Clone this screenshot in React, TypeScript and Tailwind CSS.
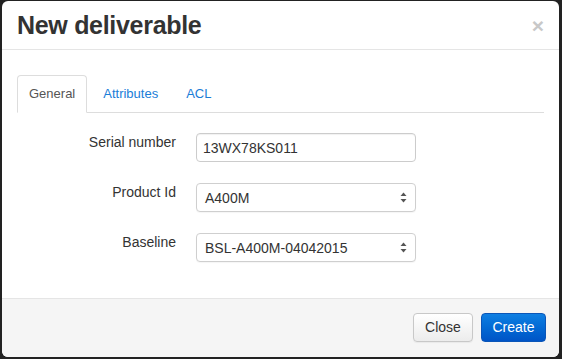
import React from 'react'

const FONT = { fontFamily: '"Liberation Sans", Arial, Helvetica, sans-serif' }

const TABS = ['General', 'Attributes', 'ACL']

function SelectArrows() {
  return (
    <svg width="7" height="11" viewBox="0 0 7 11" className="shrink-0">
      <path d="M3.5 0.5 L6.5 4 L0.5 4 Z" fill="#555" />
      <path d="M3.5 10.5 L6.5 7 L0.5 7 Z" fill="#555" />
    </svg>
  )
}

function Field({ label, value, select }: { label: string; value: string; select?: boolean }) {
  return (
    <>
      <label className="-mt-px text-right text-[14px] leading-5 text-[#333]">{label}</label>
      {select ? (
        <div className="flex h-[29px] items-center justify-between rounded-[4px] border border-[#cfcfcf] bg-white pl-[8px] pr-[8px] text-[14px] leading-5 text-[#333] shadow-[0_1px_1px_rgba(0,0,0,0.04)]">
          <span>{value}</span>
          <SelectArrows />
        </div>
      ) : (
        <div className="flex h-[29px] items-center rounded-[4px] border border-[#ccc] bg-white pl-[6px] text-[14px] leading-5 text-[#333] shadow-[inset_0_1px_1px_rgba(0,0,0,0.06)]">
          {value}
        </div>
      )}
    </>
  )
}

export default function App() {
  return (
    <div className="h-[359px] w-[562px] bg-[#222] pb-[2px] pl-[2px] pr-[3px] pt-px" style={FONT}>
      <div className="flex h-full flex-col overflow-hidden rounded-[6px] bg-white">
        {/* Header */}
        <div className="flex h-[49px] shrink-0 items-center justify-between border-b border-[#e5e5e5] pl-[15px] pr-[15px]">
          <h1 className="text-[25px] font-bold leading-none tracking-[-0.3px] text-[#333]">New deliverable</h1>
          <span className="text-[21px] font-bold leading-none text-[#c8c8c8]">×</span>
        </div>

        {/* Body */}
        <div className="flex-1 px-[15px] pt-[25px]">
          <div className="flex gap-1 border-b border-[#ddd] text-[13px]">
            {TABS.map((t, i) => (
              <div
                key={t}
                className={
                  i === 0
                    ? '-mb-px flex h-[38px] items-center rounded-t-[4px] border border-[#ddd] border-b-white bg-white px-[11px] text-[#555]'
                    : '-mb-px flex h-[38px] items-center border border-transparent px-[11px] text-[#1a7dd7]'
                }
              >
                {t}
              </div>
            ))}
          </div>

          <div className="mt-5 grid grid-cols-[159px_220px] gap-x-5 gap-y-[21px]">
            <Field label="Serial number" value="13WX78KS011" />
            <Field label="Product Id" value="A400M" select />
            <Field label="Baseline" value="BSL-A400M-04042015" select />
          </div>
        </div>

        {/* Footer */}
        <div className="flex h-[59px] shrink-0 items-start justify-end gap-2 border-t border-[#e5e5e5] bg-[#f5f5f5] pr-[13px] pt-[14px]">
          <button className="h-[29px] w-[60px] rounded-[4px] border border-[#c8c8c8] bg-gradient-to-b from-white to-[#ececec] text-[14px] text-[#333] shadow-[0_1px_1px_rgba(0,0,0,0.05)]">
            Close
          </button>
          <button className="h-[29px] w-[65px] rounded-[4px] border border-[#0b56b8] bg-gradient-to-b from-[#0f7fe2] to-[#0054c6] text-[14px] text-white">
            Create
          </button>
        </div>
      </div>
    </div>
  )
}
